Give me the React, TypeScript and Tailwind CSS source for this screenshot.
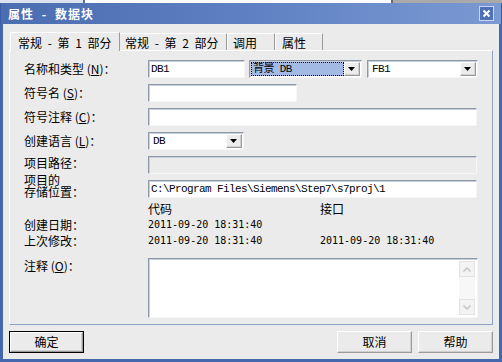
import React from "react";

const cjk = "font-['Noto_Sans_CJK_SC',sans-serif]";
const mono = "font-['Liberation_Mono','Noto_Sans_CJK_SC',monospace] text-[11px] tracking-[-0.6px]";
const digits = "font-['DejaVu_Sans_Mono',monospace] text-[10px]";
const sunken =
  "border border-t-[#8e99a8] border-l-[#8e99a8] border-r-[#f6f6f6] border-b-[#f6f6f6] shadow-[inset_1px_1px_0_#c8ced6]";
const raised =
  "border border-t-white border-l-white border-r-[#9a9a9a] border-b-[#9a9a9a] shadow-[inset_-1px_-1px_0_#d0d0d0]";

function Arrow() {
  return (
    <svg width="8" height="5" viewBox="0 0 8 5">
      <path d="M0 0h7L3.5 4z" fill="#000" />
    </svg>
  );
}

function DropBtn() {
  return (
    <div className={`w-[16px] h-full bg-[#ececec] flex items-center justify-center ${raised}`}>
      <Arrow />
    </div>
  );
}

function Label({ children }: { children: React.ReactNode }) {
  return <div className="w-[124px] shrink-0 leading-[18px]">{children}</div>;
}

export default function App() {
  return (
    <div className={`w-[502px] h-[362px] flex flex-col text-[12px] text-black ${cjk}`}>
      {/* strip of the window behind */}
      <div className="h-[3px] flex">
        <div className="w-[83px] bg-[#dde3ee]" />
        <div className="w-[2px] bg-[#5a6f94]" />
        <div className="w-[306px] bg-white" />
        <div className="w-[2px] bg-[#6b6b6b]" />
        <div className="flex-1 bg-[#a9a9a9]" />
      </div>

      {/* title bar */}
      <div className="h-[21px] bg-gradient-to-r from-[#4b6db1] via-[#5f80c2] to-[#7b9ad3] flex items-center justify-between pl-[7px] pr-[7px] border-x-[1px] border-[#3b5ea5]">
        <span className="text-white font-bold text-[12px] leading-none tracking-[1px] [word-spacing:4px]">
          属性 - 数据块
        </span>
        <div className="w-[15px] h-[15px] border border-[#c8d6ef] bg-[#4f71b5] flex items-center justify-center">
          <svg width="9" height="9" viewBox="0 0 9 9">
            <path d="M1.5 1.5l6 6M7.5 1.5l-6 6" stroke="#fff" strokeWidth="2" />
          </svg>
        </div>
      </div>

      {/* body */}
      <div className="flex-1 bg-[#ebebeb] border-x-[3px] border-b-[3px] border-[#4467ad] px-[6px] flex flex-col">
        {/* tabs */}
        <div className="flex items-end pt-[7px] h-[26px] pl-[1px] [word-spacing:3px]">
          <div className="w-[110px] h-[19px] pl-[7px] leading-[19px] border-t border-l border-white border-r border-r-[#9a9a9a] rounded-tl-[2px] relative z-10 bg-[#ebebeb] -mb-[1px]">
            常规 - 第 1 部分
          </div>
          <div className="w-[107px] h-[17px] pl-[5px] leading-[17px] border-t border-white border-r border-r-[#9a9a9a]">
            常规 - 第 2 部分
          </div>
          <div className="w-[48px] h-[17px] pl-[5px] leading-[17px] border-t border-l border-white border-r border-r-[#9a9a9a]">
            调用
          </div>
          <div className="w-[48px] h-[17px] pl-[6px] leading-[17px] border-t border-l border-white border-r border-r-[#9a9a9a]">
            属性
          </div>
        </div>

        {/* panel */}
        <div className="h-[275px] border border-t-white border-l-white border-r-[#8fa3c4] border-b-[#8fa3c4] pl-[14px] pt-[9px] flex flex-col">
          {/* row 1 */}
          <div className="flex h-[24px]">
            <Label>
              名称和类型 (<u>N</u>)：
            </Label>
            <div className={`w-[97px] h-[18px] bg-white ${sunken} pl-[2px] leading-[16px] ${mono}`}>DB1</div>
            <div className={`w-[113px] h-[18px] ml-[4px] bg-white ${sunken} flex p-[1px]`}>
              <div className={`flex-1 bg-[#a3bbe4] border border-dotted border-black leading-[12px] pl-[1px] ${mono}`}>
                背景 DB
              </div>
              <DropBtn />
            </div>
            <div className={`w-[111px] h-[18px] ml-[5px] bg-white ${sunken} flex p-[1px]`}>
              <div className={`flex-1 pl-[3px] leading-[14px] ${mono}`}>FB1</div>
              <DropBtn />
            </div>
          </div>

          {/* row 2 */}
          <div className="flex h-[24px]">
            <Label>
              符号名 (<u>S</u>)：
            </Label>
            <div className={`w-[149px] h-[18px] bg-white ${sunken}`} />
          </div>

          {/* row 3 */}
          <div className="flex h-[24px]">
            <Label>
              符号注释 (<u>C</u>)：
            </Label>
            <div className={`w-[329px] h-[18px] bg-white ${sunken}`} />
          </div>

          {/* row 4 */}
          <div className="flex h-[24px]">
            <Label>
              创建语言 (<u>L</u>)：
            </Label>
            <div className={`w-[96px] h-[18px] bg-white ${sunken} flex p-[1px]`}>
              <div className={`flex-1 pl-[3px] leading-[14px] ${mono}`}>DB</div>
              <DropBtn />
            </div>
          </div>

          {/* row 5 */}
          <div className="flex h-[18px]">
            <div className="w-[124px] shrink-0 leading-[14px]">项目路径：</div>
            <div className={`w-[329px] h-[18px] bg-[#ebebeb] ${sunken}`} />
          </div>

          {/* row 6 */}
          <div className="flex h-[24px] items-end">
            <div className="w-[124px] shrink-0 flex flex-col">
              <div className="leading-[12px]">项目的</div>
              <div className="leading-[12px]">存储位置：</div>
            </div>
            <div className={`w-[329px] h-[18px] bg-white ${sunken} pl-[2px] leading-[16px] ${mono}`}>
              C:\Program Files\Siemens\Step7\s7proj\1
            </div>
          </div>

          {/* dates */}
          <div className="flex h-[16px] mt-[3px] leading-[16px]">
            <div className="w-[124px] shrink-0" />
            <div className="w-[172px]">代码</div>
            <div>接口</div>
          </div>
          <div className="flex h-[16px] leading-[16px]">
            <div className="w-[124px] shrink-0">创建日期：</div>
            <div className={`w-[172px] ${digits}`}>2011-09-20 18:31:40</div>
          </div>
          <div className="flex h-[16px] leading-[16px]">
            <div className="w-[124px] shrink-0">上次修改：</div>
            <div className={`w-[172px] ${digits}`}>2011-09-20 18:31:40</div>
            <div className={digits}>2011-09-20 18:31:40</div>
          </div>

          {/* comment */}
          <div className="flex mt-[9px]">
            <div className="w-[124px] shrink-0 leading-[14px] pt-[1px]">
              注释 (<u>O</u>)：
            </div>
            <div className={`w-[330px] h-[60px] bg-white ${sunken} flex justify-end p-[2px]`}>
              <div className="w-[16px] h-full bg-[#f7f7f7] flex flex-col justify-between">
                <div className="h-[16px] border border-[#e2e2e2] bg-[#f3f3f3] flex items-center justify-center">
                  <svg width="8" height="5" viewBox="0 0 8 5">
                    <path d="M0.5 4.5L4 1l3.5 3.5" fill="none" stroke="#c4c4c4" strokeWidth="1.5" />
                  </svg>
                </div>
                <div className="h-[16px] border border-[#e2e2e2] bg-[#f3f3f3] flex items-center justify-center">
                  <svg width="8" height="5" viewBox="0 0 8 5">
                    <path d="M0.5 0.5L4 4l3.5-3.5" fill="none" stroke="#c4c4c4" strokeWidth="1.5" />
                  </svg>
                </div>
              </div>
            </div>
          </div>
        </div>

        {/* buttons */}
        <div className="flex mt-[6px] h-[22px]">
          <div className="w-[75px] h-[22px] border border-black">
            <div className={`h-full ${raised} flex items-center justify-center`}>确定</div>
          </div>
          <div className="flex-1" />
          <div className={`w-[75px] h-[22px] ${raised} flex items-center justify-center`}>取消</div>
          <div className={`w-[75px] h-[22px] ml-[6px] ${raised} flex items-center justify-center`}>帮助</div>
        </div>
      </div>
    </div>
  );
}
